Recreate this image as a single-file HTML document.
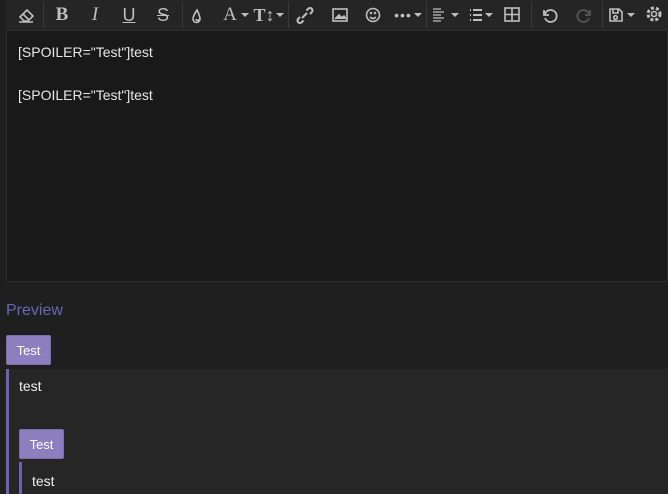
<!DOCTYPE html>
<html><head><meta charset="utf-8"><style>
*{box-sizing:border-box;margin:0;padding:0}
body{width:668px;height:494px;background:#1f1f1f;font-family:"Liberation Sans",sans-serif;position:relative;overflow:hidden;color:#ddd}
.tb{position:absolute;left:6px;top:0;width:662px;height:31px;background:#252525;border-bottom:1px solid #2c2c2c}
.ic{position:absolute;top:0;height:30px;line-height:30px;color:#bfbfbf;font-size:17px;text-align:center;transform:translateX(-50%)}
.sep{position:absolute;top:2px;width:1px;height:26px;background:#3a3a3a}
.car{position:absolute;top:13px;width:0;height:0;border-left:4px solid transparent;border-right:4px solid transparent;border-top:4px solid #bfbfbf;transform:translateX(-50%)}
.ed{position:absolute;left:6px;top:31px;width:662px;height:251px;background:#191919;border:1px solid #2e2e2e;border-top:none}
.ed p{position:absolute;left:11px;font-size:14px;color:#e6e6e6}
.pv{position:absolute;left:6px;top:302px;font-size:16px;color:#6b66b8}
.btn{position:absolute;width:45px;height:30px;background:#8b7fc0;border:1px solid #7a70b0;border-radius:2px;color:#fff;font-size:13px;text-align:center;line-height:29px}
.blk{position:absolute;background:#262626;border-left:3px solid #6b63b5}
.t{position:absolute;font-size:14px;color:#eee}
svg{position:absolute}
</style></head><body>
<div class="tb"></div>
<svg style="left:0;top:0" width="668" height="31" fill="none" stroke="#bfbfbf" stroke-width="1.6">
<path d="M20 17l7-7 6 6-5 5h-4zM23 14l6 6M19 22h14"/>
<path d="M197 10q-4 6-4 9a3.5 3.5 0 007 0q0-3-3-9zM196 19a1.5 1.5 0 003 0"/>
<path d="M300 17l-2 2a2.5 2.5 0 003.5 3.5l2-2M310 14l2-2a2.5 2.5 0 00-3.5-3.5l-2 2M302 18l5-5" stroke-width="2"/>
<rect x="333" y="9" width="14" height="12"/><path d="M335 19l4-4 3 3 2-2 2 3" fill="#bfbfbf"/>
<circle cx="373" cy="15" r="6.5"/><path d="M370 17q3 3 6 0"/><circle cx="371" cy="13" r=".5"/><circle cx="375" cy="13" r=".5"/>
<path d="M433 9h8M433 12h11M433 15h8M433 18h11M433 21h8" stroke-width="1.3"/>
<path d="M470 10h1M470 15h1M470 20h1M473 10h9M473 15h9M473 20h9" stroke-width="2"/>
<rect x="505" y="8" width="14" height="13"/><path d="M512 8v13M505 14.5h14"/>
<path d="M544 10v5h5M545 14a6 6 0 110 4" stroke-width="1.8"/>
<path d="M590 10v5h-5M589 14a6 6 0 100 4" stroke="#555" stroke-width="1.8"/>
<path d="M610 9h9l3 3v9h-12zM613 9v4h5V9" /><circle cx="615.5" cy="17.5" r="1.8"/>
<circle cx="654" cy="14" r="2.5"/><circle cx="654" cy="14" r="6" stroke-dasharray="3 2" stroke-width="3"/>
</svg>
<div class="ic" style="left:62px;font-weight:bold;font-family:'Liberation Serif',serif;font-size:19px">B</div>
<div class="ic" style="left:95px;font-style:italic;font-family:'Liberation Serif',serif;font-size:19px">I</div>
<div class="ic" style="left:129px;text-decoration:underline;font-size:18px">U</div>
<div class="ic" style="left:163px;text-decoration:line-through;font-size:18px">S</div>
<div class="ic" style="left:230px;font-family:'Liberation Serif',serif;font-size:19px">A</div>
<div class="car" style="left:245px"></div>
<div class="ic" style="left:264px;font-family:'Liberation Serif',serif;font-size:18px;font-weight:bold">T↕</div>
<div class="car" style="left:280px"></div>
<div class="ic" style="left:403px;font-size:14px;letter-spacing:1px">•••</div>
<div class="car" style="left:418px"></div>
<div class="car" style="left:455px"></div>
<div class="car" style="left:489px"></div>
<div class="car" style="left:631px"></div>
<div class="sep" style="left:43px"></div><div class="sep" style="left:182px"></div><div class="sep" style="left:288px"></div><div class="sep" style="left:426px"></div><div class="sep" style="left:531px"></div><div class="sep" style="left:602px"></div>
<div class="ed"><p style="top:13px">[SPOILER="Test"]test</p><p style="top:56px">[SPOILER="Test"]test</p></div>
<div class="pv">Preview</div>
<div class="btn" style="left:6px;top:335px">Test</div>
<div class="blk" style="left:6px;top:369px;width:662px;height:125px"></div>
<div class="t" style="left:19px;top:378px">test</div>
<div class="btn" style="left:19px;top:429px">Test</div>
<div class="blk" style="left:19px;top:462px;width:649px;height:32px"></div>
<div class="t" style="left:32px;top:473px">test</div>
</body></html>
